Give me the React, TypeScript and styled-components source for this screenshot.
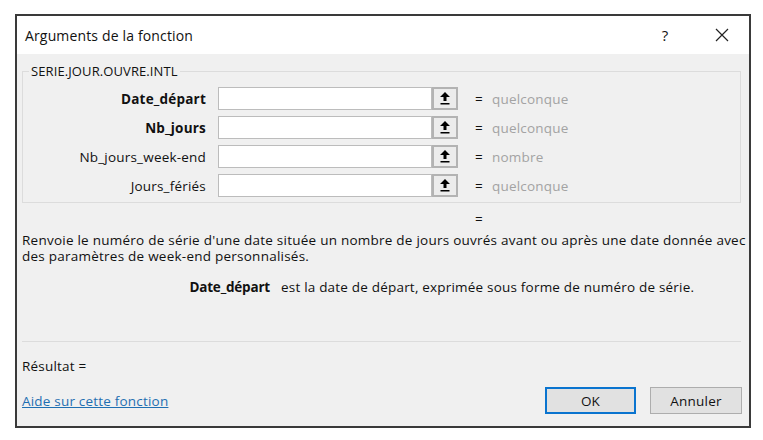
import styled, { createGlobalStyle } from 'styled-components';

const GlobalStyle = createGlobalStyle`
  html, body {
    margin: 0;
    background: #ffffff;
    font-family: "Open Sans", "Noto Sans", sans-serif;
    color: #111;
  }
`;

const Page = styled.div`
  padding: 14px 0 0 15px;
`;

const Dialog = styled.div`
  box-sizing: border-box;
  width: 736px;
  height: 414px;
  border: 2px solid #3a3a3a;
  background: #f0f0f0;
  display: flex;
  flex-direction: column;
`;

const TitleBar = styled.div`
  height: 38px;
  background: #ffffff;
  display: flex;
  align-items: center;
  padding-left: 8px;
`;

const Title = styled.span`
  font-size: 14px;
  letter-spacing: 0.15px;
  flex: 1;
`;

const HelpGlyph = styled.span`
  font-size: 15px;
  width: 20px;
  text-align: center;
  margin-right: 40px;
`;

const CloseButton = styled.span`
  display: flex;
  width: 14px;
  height: 14px;
  margin-right: 20px;
`;

const Body = styled.div`
  flex: 1;
  padding: 0 8px 0 5px;
  display: flex;
  flex-direction: column;
  font-size: 13.5px;
  letter-spacing: 0.2px;
  line-height: 16px;
`;

const GroupBox = styled.fieldset`
  margin: 9px 0 0 0;
  border: 1px solid #dcdcdc;
  padding: 8px 0 5px 0;
  display: flex;
  flex-direction: column;
  gap: 6px;
`;

const GroupLegend = styled.legend`
  margin-left: 6px;
  padding: 0 2px;
  font-size: 13px;
  letter-spacing: 0.1px;
  line-height: 16px;
`;

const ArgRow = styled.div`
  display: flex;
  align-items: center;
  height: 23px;
`;

const ArgLabel = styled.span<{ $bold?: boolean }>`
  width: 183px;
  margin-right: 12px;
  text-align: right;
  font-weight: ${p => (p.$bold ? 700 : 400)};
`;

const InputBox = styled.div`
  box-sizing: border-box;
  width: 214px;
  height: 23px;
  background: #ffffff;
  border: 1px solid #bcbcbc;
`;

const RefButton = styled.div`
  box-sizing: border-box;
  width: 26px;
  height: 23px;
  border: 2px solid #b3b3b3;
  background: #ececec;
  display: flex;
  align-items: center;
  justify-content: center;
`;

const Eq = styled.span`
  width: 17px;
  margin-left: 17px;
`;

const ArgValue = styled.span`
  color: #a3a3a3;
`;

const EqLine = styled.div`
  margin-top: 8px;
  padding-left: 453px;
`;

const Description = styled.div`
  margin-top: 5px;
  white-space: nowrap;
  letter-spacing: 0.24px;
`;

const DescLine = styled.div`
  height: 16px;
`;

const ArgHelp = styled.div`
  margin-top: 15px;
  display: flex;
  gap: 11px;
`;

const ArgHelpName = styled.span`
  width: 248px;
  text-align: right;
  font-weight: 700;
  letter-spacing: -0.2px;
`;

const Separator = styled.div`
  margin-top: 46px;
  height: 1px;
  background: #dcdcdc;
`;

const Result = styled.div`
  margin-top: 16px;
`;

const Footer = styled.div`
  margin-top: 13px;
  display: flex;
  align-items: center;
  gap: 14px;
`;

const HelpLink = styled.a`
  flex: 1;
  color: #1f6fb2;
  text-decoration: underline;
`;

const DialogButton = styled.button<{ $primary?: boolean }>`
  box-sizing: border-box;
  width: ${p => (p.$primary ? 91 : 92)}px;
  height: 27px;
  font-family: inherit;
  font-size: 13.5px;
  letter-spacing: 0.2px;
  color: #111;
  background: #e1e1e1;
  border: ${p => (p.$primary ? '2px solid #0a74cf' : '1px solid #adadad')};
  padding: 0;
  margin-right: ${p => (p.$primary ? 0 : -1)}px;
`;

const UpArrow = () => (
  <svg width="10" height="13" viewBox="0 0 10 13">
    <polygon points="5,0 10,5 6.5,5 6.5,9 3.5,9 3.5,5 0,5" fill="#000" />
    <rect x="0.5" y="11" width="9" height="1.5" fill="#000" />
  </svg>
);

const CloseIcon = () => (
  <svg width="14" height="14" viewBox="0 0 14 14">
    <path d="M1 1 L13 13 M13 1 L1 13" stroke="#222" strokeWidth="1.2" />
  </svg>
);

const args = [
  { name: 'Date_départ', bold: true, value: 'quelconque' },
  { name: 'Nb_jours', bold: true, value: 'quelconque' },
  { name: 'Nb_jours_week-end', bold: false, value: 'nombre' },
  { name: 'Jours_fériés', bold: false, value: 'quelconque' },
];

export default function App() {
  return (
    <Page>
      <GlobalStyle />
      <Dialog>
        <TitleBar>
          <Title>Arguments de la fonction</Title>
          <HelpGlyph>?</HelpGlyph>
          <CloseButton>
            <CloseIcon />
          </CloseButton>
        </TitleBar>
        <Body>
          <GroupBox>
            <GroupLegend>SERIE.JOUR.OUVRE.INTL</GroupLegend>
            {args.map(a => (
              <ArgRow key={a.name}>
                <ArgLabel $bold={a.bold}>{a.name}</ArgLabel>
                <InputBox />
                <RefButton>
                  <UpArrow />
                </RefButton>
                <Eq>=</Eq>
                <ArgValue>{a.value}</ArgValue>
              </ArgRow>
            ))}
          </GroupBox>
          <EqLine>=</EqLine>
          <Description>
            <DescLine>
              Renvoie le numéro de série d'une date située un nombre de jours ouvrés avant ou après une date donnée avec
            </DescLine>
            <DescLine>des paramètres de week-end personnalisés.</DescLine>
          </Description>
          <ArgHelp>
            <ArgHelpName>Date_départ</ArgHelpName>
            <span>est la date de départ, exprimée sous forme de numéro de série.</span>
          </ArgHelp>
          <Separator />
          <Result>Résultat =</Result>
          <Footer>
            <HelpLink href="#">Aide sur cette fonction</HelpLink>
            <DialogButton $primary>OK</DialogButton>
            <DialogButton>Annuler</DialogButton>
          </Footer>
        </Body>
      </Dialog>
    </Page>
  );
}
